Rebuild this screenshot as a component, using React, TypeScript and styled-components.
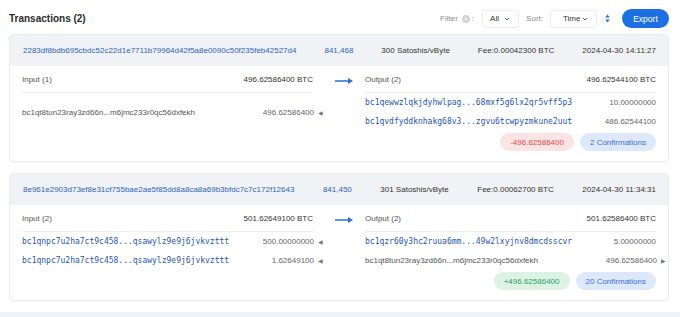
import React from "react";
import styled, { createGlobalStyle } from "styled-components";

const GlobalStyle = createGlobalStyle`
    body {
        margin: 0;
        background: #ffffff;
        font-family: "Liberation Sans", Arial, sans-serif;
        color: #333333;
    }
`;

const Page = styled.div`
    padding: 9px 11px 0 9px;
`;

const Toolbar = styled.div`
    display: flex;
    align-items: center;
    justify-content: space-between;
    height: 19px;
    margin-bottom: 6px;
`;

const Title = styled.h2`
    margin: 0;
    font-size: 10px;
    font-weight: bold;
    color: #2b2b2b;
`;

const Controls = styled.div`
    display: flex;
    align-items: center;
    font-size: 8px;
    color: #8a8a8a;
`;

const Info = styled.span`
    display: inline-flex;
    align-items: center;
    justify-content: center;
    width: 8px;
    height: 8px;
    margin: 0 2px 0 4px;
    border-radius: 50%;
    background: #d3d3d3;
    color: #fff;
    font-size: 6px;
    font-weight: bold;
`;

const Select = styled.div<{ $w: number; $pl: number }>`
    display: flex;
    align-items: center;
    justify-content: space-between;
    box-sizing: border-box;
    width: ${(p) => p.$w}px;
    height: 18px;
    padding: 0 8px 0 ${(p) => p.$pl}px;
    border: 1px solid #ececec;
    border-radius: 3px;
    color: #333;
    font-size: 8px;
`;

const SortLabel = styled.span`
    margin: 0 7px;
`;

const SortIcon = styled.svg`
    margin: 0 12px 0 8px;
`;

const ExportButton = styled.button`
    width: 47px;
    height: 19px;
    border: none;
    border-radius: 10px;
    background: #1d6fe2;
    color: #fff;
    font-family: inherit;
    font-size: 8.5px;
    padding: 0;
`;

const Card = styled.div`
    border: 1px solid #eaecef;
    border-radius: 4px;
    box-shadow: 0 1px 2px rgba(0, 0, 0, 0.04);
    overflow: hidden;
    & + & {
        margin-top: 11px;
    }
`;

const CardHead = styled.div`
    display: flex;
    align-items: center;
    justify-content: space-between;
    height: 31px;
    padding: 0 12px 0 13px;
    background: #f1f2f5;
    font-size: 8px;
    color: #333;
`;

const LinkText = styled.span`
    color: #2f64c0;
`;

const Body = styled.div`
    display: grid;
    grid-template-columns: 1fr 52px 1fr;
    padding: 8px 12px 10px 12px;
`;

const SideHead = styled.div`
    display: flex;
    justify-content: space-between;
    line-height: 12px;
    padding-bottom: 6px;
    border-bottom: 1px solid #eeeeee;
    font-size: 8px;
    color: #555;
`;

const Total = styled.span`
    color: #333;
`;

const ArrowCell = styled.div`
    display: flex;
    justify-content: center;
    padding: 3px 0 0 10px;
`;

const List = styled.div`
    display: flex;
    flex-direction: column;
    justify-content: center;
`;

const Row = styled.div`
    display: flex;
    align-items: center;
    justify-content: space-between;
    height: 19px;
    font-size: 8px;
    color: #555;
`;

const Address = styled.span<{ $link?: boolean }>`
    ${(p) =>
        p.$link
            ? `font-family: "DejaVu Sans Mono", monospace; color: #1f56b0; font-size: 8px;`
            : `color: #555;`}
`;

const Amount = styled.span`
    position: relative;
    color: #666;
`;

const Caret = styled.span`
    font-size: 6px;
    color: #777;
    margin-left: 4px;
    margin-right: -10px;
`;

const Footer = styled.div`
    grid-column: 3;
    display: flex;
    justify-content: flex-end;
    gap: 6px;
    margin-top: 2px;
`;

const Badge = styled.span<{ $tone: "red" | "green" | "blue" }>`
    display: inline-flex;
    align-items: center;
    height: 18px;
    padding: 0 10px;
    border-radius: 9px;
    font-size: 8px;
    background: ${(p) => (p.$tone === "red" ? "#fde4e4" : p.$tone === "green" ? "#dcf2e5" : "#dde9fb")};
    color: ${(p) => (p.$tone === "red" ? "#e5484d" : p.$tone === "green" ? "#2aa35f" : "#3a6fd6")};
`;

const BottomBand = styled.div`
    height: 12px;
    margin: 11px -11px 0 -9px;
    background: #eef3fb;
`;

type Line = { addr: string; amount: string; link?: boolean; caret?: "in" | "out" };

type Tx = {
    hash: string;
    block: string;
    rate: string;
    fee: string;
    time: string;
    inTotal: string;
    outTotal: string;
    inputs: Line[];
    outputs: Line[];
    change: string;
    tone: "red" | "green";
    confirmations: string;
};

const txs: Tx[] = [
    {
        hash: "2283df8bdb695cbdc52c22d1e7711b79964d42f5a8e0090c50f235feb42527d4",
        block: "841,468",
        rate: "300 Satoshis/vByte",
        fee: "Fee:0.00042300 BTC",
        time: "2024-04-30 14:11:27",
        inTotal: "496.62586400 BTC",
        outTotal: "496.62544100 BTC",
        inputs: [{ addr: "bc1qt8tun23ray3zd66n...m6jmc233r0qc56dxfekh", amount: "496.62586400", caret: "in" }],
        outputs: [
            { addr: "bc1qewwzlqkjdyhwlpag...68mxf5g6lx2qr5vff5p3", amount: "10.00000000", link: true },
            { addr: "bc1qvdfyddknhakg68v3...zgvu6tcwpyzmkune2uut", amount: "486.62544100", link: true },
        ],
        change: "-496.62586400",
        tone: "red",
        confirmations: "2 Confirmations",
    },
    {
        hash: "8e961e2903d73ef8e31cf755bae2ae5f85dd8a8ca8a69b3bfdc7c7c172f12643",
        block: "841,450",
        rate: "301 Satoshis/vByte",
        fee: "Fee:0.00062700 BTC",
        time: "2024-04-30 11:34:31",
        inTotal: "501.62649100 BTC",
        outTotal: "501.62586400 BTC",
        inputs: [
            { addr: "bc1qnpc7u2ha7ct9c458...qsawylz9e9j6jvkvzttt", amount: "500.00000000", link: true, caret: "in" },
            { addr: "bc1qnpc7u2ha7ct9c458...qsawylz9e9j6jvkvzttt", amount: "1.62649100", link: true, caret: "in" },
        ],
        outputs: [
            { addr: "bc1qzr60y3hc2ruua6mm...49w2lxyjnv8dmcdsscvr", amount: "5.00000000", link: true },
            { addr: "bc1qt8tun23ray3zd66n...m6jmc233r0qc56dxfekh", amount: "496.62586400", caret: "out" },
        ],
        change: "+496.62586400",
        tone: "green",
        confirmations: "20 Confirmations",
    },
];

const Chevron = () => (
    <svg width="6" height="4" viewBox="0 0 6 4">
        <path d="M0.8 0.8 L3 3 L5.2 0.8" fill="none" stroke="#666" strokeWidth="1" />
    </svg>
);

const LineRow = ({ line }: { line: Line }) => (
    <Row>
        <Address $link={line.link}>{line.addr}</Address>
        <Amount>
            {line.amount}
            {line.caret && <Caret>{line.caret === "in" ? "◀" : "▶"}</Caret>}
        </Amount>
    </Row>
);

const TxCard = ({ tx }: { tx: Tx }) => (
    <Card>
        <CardHead>
            <LinkText>{tx.hash}</LinkText>
            <LinkText>{tx.block}</LinkText>
            <span>{tx.rate}</span>
            <span>{tx.fee}</span>
            <span>{tx.time}</span>
        </CardHead>
        <Body>
            <SideHead>
                <span>Input ({tx.inputs.length})</span>
                <Total>{tx.inTotal}</Total>
            </SideHead>
            <ArrowCell>
                <svg width="19" height="8" viewBox="0 0 19 8">
                    <path d="M0 4 H16" stroke="#2d6fd6" strokeWidth="1.3" />
                    <path d="M13 1 L18 4 L13 7 Z" fill="#2d6fd6" />
                </svg>
            </ArrowCell>
            <SideHead>
                <span>Output ({tx.outputs.length})</span>
                <Total>{tx.outTotal}</Total>
            </SideHead>
            <List>
                {tx.inputs.map((l, i) => (
                    <LineRow key={i} line={l} />
                ))}
            </List>
            <div />
            <List>
                {tx.outputs.map((l, i) => (
                    <LineRow key={i} line={l} />
                ))}
            </List>
            <Footer>
                <Badge $tone={tx.tone}>{tx.change}</Badge>
                <Badge $tone="blue">{tx.confirmations}</Badge>
            </Footer>
        </Body>
    </Card>
);

const App = () => {
    return (
        <Page>
            <GlobalStyle />
            <Toolbar>
                <Title>Transactions (2)</Title>
                <Controls>
                    <span>Filter</span>
                    <Info>i</Info>
                    <span>:</span>
                    <Select $w={37} $pl={7} style={{ marginLeft: 8 }}>
                        <span>All</span>
                        <Chevron />
                    </Select>
                    <SortLabel>Sort:</SortLabel>
                    <Select $w={47} $pl={12}>
                        <span>Time</span>
                        <Chevron />
                    </Select>
                    <SortIcon width="5" height="9" viewBox="0 0 5 9">
                        <path d="M2.5 0.5 L4.8 3.6 H0.2 Z" fill="#2d6fd6" />
                        <path d="M2.5 8.5 L4.8 5.4 H0.2 Z" fill="#2d6fd6" />
                    </SortIcon>
                    <ExportButton>Export</ExportButton>
                </Controls>
            </Toolbar>
            {txs.map((tx) => (
                <TxCard key={tx.hash} tx={tx} />
            ))}
            <BottomBand />
        </Page>
    );
};

export default App;
